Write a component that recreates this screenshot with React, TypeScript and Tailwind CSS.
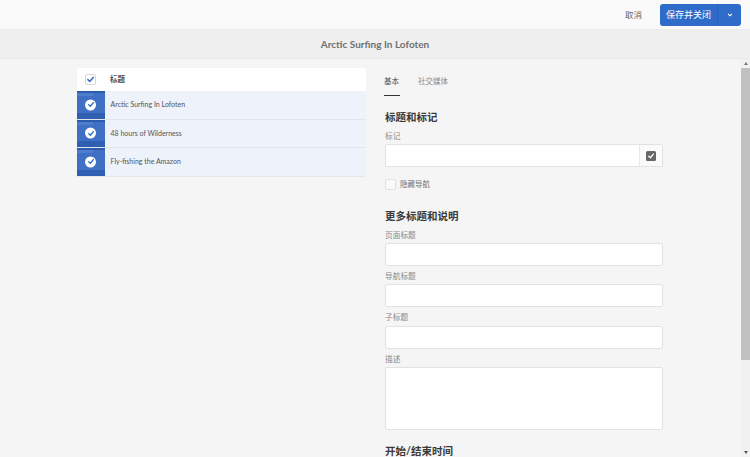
const font = "font-['Lato','Noto_Sans_CJK_SC',sans-serif]";

const rows = ["Arctic Surfing In Lofoten", "48 hours of Wilderness", "Fly-fishing the Amazon"];

const Check = ({ className }: { className?: string }) => (
	<svg viewBox="0 0 12 12" className={className} fill="none" stroke="currentColor" strokeWidth="2" strokeLinecap="round" strokeLinejoin="round">
		<path d="M2.5 6.2 L5 8.7 L9.6 3.2" />
	</svg>
);

const Thumb = () => (
	<div className="relative h-full w-[28px] shrink-0 overflow-hidden bg-[#3f70c4]">
		<div className="h-[2px] bg-[#2c5cae]" />
		<div className="h-[3px] w-[16px] bg-[#4d7dcb]" />
		<div className="absolute bottom-0 left-0 h-[6px] w-full bg-[#2f5fb0]" />
		<div className="absolute left-[8px] top-1/2 flex h-[11px] w-[11px] -translate-y-1/2 items-center justify-center rounded-full bg-white text-[#2f6bc8]">
			<Check className="h-[8px] w-[8px]" />
		</div>
	</div>
);

const Field = ({ label, className }: { label: string; className: string }) => (
	<div className="flex flex-col">
		<label className="h-[18.33px] text-[7.7px] leading-[20px] text-[#8a8a8a]">{label}</label>
		<div className={`w-[278px] rounded-[2px] border border-[#e2e2e2] bg-white ${className}`} />
	</div>
);

const App = () => {
	return (
		<div className={`flex h-[457px] w-[750px] flex-col overflow-hidden bg-[#f5f5f5] ${font}`}>
			<header className="flex h-[30px] shrink-0 items-center justify-end border-b border-[#ececec] bg-[#fafafa] pr-[9px]">
				<button className="mr-[18px] pt-[2px] text-[8.5px] text-[#666]">取消</button>
				<div className="flex h-[22px] w-[81px] overflow-hidden rounded-[3px] bg-[#2f6bc8] text-white">
					<button className="w-[58px] border-r border-[#2a5fb3] text-[9px]">保存并关闭</button>
					<button className="flex flex-1 items-center justify-center">
						<svg viewBox="0 0 8 6" className="h-[4px] w-[6px]" fill="none" stroke="currentColor" strokeWidth="1.6">
							<path d="M1 1.2 L4 4.2 L7 1.2" />
						</svg>
					</button>
				</div>
			</header>

			<div className="flex h-[29px] shrink-0 items-center justify-center border-b border-[#e8e8e8] bg-[#efefef] text-[10px] font-bold text-[#707070]">
				Arctic Surfing In Lofoten
			</div>

			<div className="flex min-h-0 flex-1">
				<main className="flex min-w-0 flex-1 overflow-hidden pl-[77px] pt-[9px]">
					<section className="w-[289px] shrink-0">
						<div className="flex h-[23px] items-center bg-white">
							<div className="ml-[8px] flex h-[11px] w-[11px] items-center justify-center rounded-[2px] border border-[#d6d6d6] bg-white text-[#2f6bc8]">
								<Check className="h-[9px] w-[9px]" />
							</div>
							<span className="ml-[14px] text-[7.5px] font-bold text-[#505050]">标题</span>
						</div>
						<div className="overflow-hidden rounded-b-[2px]">
							{rows.map((row) => (
								<div key={row} className="flex h-[28.5px] items-center border-b border-[#e2e6ec] bg-[#edf2fb]">
									<Thumb />
									<span className="mb-px ml-[5.5px] text-[7px] text-[#555]">{row}</span>
								</div>
							))}
						</div>
					</section>

					<section className="ml-[18px] flex w-[279px] shrink-0 flex-col">
						<nav className="flex h-[28px] items-start gap-[18px] pt-[8px] text-[7.5px] leading-[12px]">
							<div className="flex h-[20px] w-[16px] flex-col justify-between whitespace-nowrap text-[#505050]">
								<span>基本</span>
								<span className="block h-px w-[16px] bg-[#333]" />
							</div>
							<span className="text-[#8a8a8a]">社交媒体</span>
						</nav>
						<div className="flex flex-col pl-px">
							<h2 className="mt-[13px] h-[17px] text-[10.5px] font-bold leading-[16px] text-[#3a3a3a]">标题和标记</h2>
							<div className="mt-[3px] flex flex-col">
								<label className="h-[15px] text-[7.7px] leading-[14px] text-[#8a8a8a]">标记</label>
								<div className="flex h-[23px] w-[278px] overflow-hidden rounded-[2px] border border-[#e2e2e2] bg-white">
									<div className="flex-1" />
									<div className="flex w-[23px] items-center justify-center border-l border-[#e8e8e8] bg-[#fafafa]">
										<div className="flex h-[10px] w-[10px] items-center justify-center rounded-[1.5px] bg-[#666] text-white">
											<Check className="h-[8px] w-[8px]" />
										</div>
									</div>
								</div>
							</div>
							<div className="mt-[12px] flex items-center">
								<div className="h-[11px] w-[11px] rounded-[2px] border border-[#e0e0e0] bg-[#fafafa]" />
								<span className="ml-[4px] text-[7.5px] text-[#707070]">隐藏导航</span>
							</div>
							<h2 className="mt-[18px] h-[16.4px] text-[10.5px] font-bold leading-[16px] text-[#3a3a3a]">更多标题和说明</h2>
							<div className="flex flex-col">
								<Field label="页面标题" className="h-[23px]" />
								<Field label="导航标题" className="h-[23px]" />
								<Field label="子标题" className="h-[23px]" />
								<Field label="描述" className="h-[63px]" />
							</div>
							<h2 className="mt-[13px] h-[17px] shrink-0 text-[10.5px] font-bold leading-[16px] text-[#3a3a3a]">开始/结束时间</h2>
						</div>
					</section>
				</main>

				<aside className="flex w-[9px] shrink-0 flex-col items-stretch bg-[#f1f1f1]">
					<div className="flex h-[9px] items-center justify-center">
						<div className="h-0 w-0 border-x-[2.5px] border-b-[3px] border-x-transparent border-b-[#777]" />
					</div>
					<div className="h-[292px] bg-[#c1c1c1]" />
					<div className="flex-1" />
					<div className="flex h-[9px] items-center justify-center">
						<div className="h-0 w-0 border-x-[2.5px] border-t-[3px] border-x-transparent border-t-[#555]" />
					</div>
				</aside>
			</div>
		</div>
	);
};

export default App;
